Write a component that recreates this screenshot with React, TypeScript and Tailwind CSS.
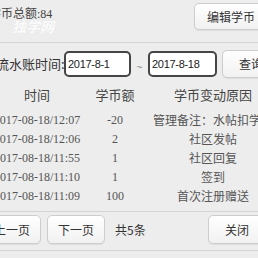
import React from "react";

const cjk = "font-['Liberation_Serif','Noto_Sans_CJK_SC',serif]";
const btn =
  "flex items-center justify-center shrink-0 rounded-[5px] border border-[#cdcdcd] bg-gradient-to-b from-white to-[#f1f1f1] shadow-[0_1px_1px_rgba(0,0,0,0.07)] text-[12px] text-[#333] font-['Noto_Sans_CJK_SC',sans-serif]";

const rows = [
  ["2017-08-18/12:07", "-20", "管理备注：水帖扣学币"],
  ["2017-08-18/12:06", "2", "社区发帖"],
  ["2017-08-18/11:55", "1", "社区回复"],
  ["2017-08-18/11:10", "1", "签到"],
  ["2017-08-18/11:09", "100", "首次注册赠送"],
];

export default function App() {
  return (
    <div className={`w-[258px] h-[258px] overflow-hidden bg-[#ededed] ${cjk}`}>
      {/* top bar */}
      <div className="h-[42px] flex justify-between items-start">
        <div className="relative">
          <div className="ml-[-11px] mt-[7px] text-[12px] leading-[14px] text-[#444] whitespace-nowrap">
            学币总额:84
          </div>
          <div className="absolute left-[12px] top-[19px] text-[14px] leading-[14px] font-bold italic text-white/90 whitespace-nowrap font-['Noto_Sans_CJK_SC',sans-serif] [text-shadow:0_0_1px_rgba(0,0,0,0.08)]">
            独学网
          </div>
        </div>
        <div className={`${btn} mt-[3px] h-[27px] w-[74px] mr-[-10px]`}>编辑学币</div>
      </div>
      <div className="h-px bg-[#d4d4d4]" />

      {/* date row */}
      <div className="pt-[8px] flex items-center h-[34px]">
        <div className="ml-[-4px] w-[68px] shrink-0 text-[13px] leading-[26px] text-[#333] whitespace-nowrap font-['Noto_Sans_CJK_SC',sans-serif]">
          流水账时间:
        </div>
        <div className="w-[67px] h-[26px] shrink-0 bg-white border-2 border-[#454545] rounded-[5px] flex items-center pl-[2px] text-[11px] tracking-[-0.3px] text-[#222] font-['Liberation_Sans',sans-serif]">
          2017-8-1
        </div>
        <div className="w-[17px] shrink-0 text-center text-[10px] text-[#888] pt-[6px] font-['Liberation_Sans',sans-serif]">~</div>
        <div className="w-[69px] h-[26px] shrink-0 bg-white border-2 border-[#454545] rounded-[5px] flex items-center pl-[2px] text-[11px] tracking-[-0.3px] text-[#222] font-['Liberation_Sans',sans-serif]">
          2017-8-18
        </div>
        <div className={`${btn} ml-[5px] h-[28px] w-[58px]`}>查询</div>
      </div>

      {/* table */}
      <div className="ml-[-10px] mt-[8px] w-[290px] grid grid-cols-[94px_62px_134px] text-[#444]">
        <div className="h-[20px] flex items-center justify-center text-[13px] font-['Noto_Sans_CJK_SC',sans-serif]">时间</div>
        <div className="h-[20px] flex items-center justify-center text-[13px] font-['Noto_Sans_CJK_SC',sans-serif]">学币额</div>
        <div className="h-[20px] flex items-center justify-center text-[13px] font-['Noto_Sans_CJK_SC',sans-serif]">学币变动原因</div>
      </div>
      <div className="ml-[-10px] mt-[5px] w-[290px] grid grid-cols-[94px_62px_134px] auto-rows-[19px] text-[#555]">
        {rows.map((r, i) => (
          <React.Fragment key={i}>
            <div className="flex items-center justify-center text-[12px] whitespace-nowrap font-['Liberation_Serif',serif]">{r[0]}</div>
            <div className="flex items-center justify-center text-[12px] whitespace-nowrap font-['Liberation_Serif',serif]">{r[1]}</div>
            <div className="flex items-center justify-center text-[12px] whitespace-nowrap font-['Noto_Sans_CJK_SC',sans-serif]">{r[2]}</div>
          </React.Fragment>
        ))}
      </div>

      <div className="mt-[6px] h-px bg-[#d4d4d4]" />

      {/* bottom buttons */}
      <div className="pt-[3px] h-[38px] flex items-start">
        <div className={`${btn} ml-[-17px] h-[29px] w-[58px]`}>上一页</div>
        <div className={`${btn} ml-[6px] h-[29px] w-[58px]`}>下一页</div>
        <div className="ml-[10px] h-[29px] flex items-center text-[12px] text-[#333] font-['Noto_Sans_CJK_SC',sans-serif] whitespace-nowrap">
          共5条
        </div>
        <div className={`${btn} ml-auto mr-[-8px] h-[29px] w-[58px]`}>关闭</div>
      </div>
      <div className="h-px bg-[#d4d4d4]" />
    </div>
  );
}
